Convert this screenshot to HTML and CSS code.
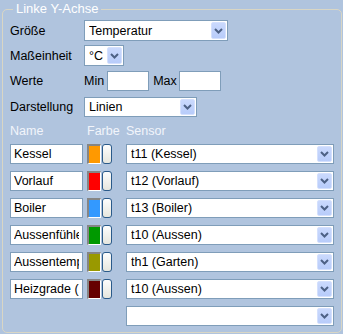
FILE: index.html
```html
<!DOCTYPE html>
<html lang="de">
<head>
<meta charset="UTF-8">
<meta name="viewport" content="width=device-width, initial-scale=1.0">
<title>Linke Y-Achse</title>
<link rel="stylesheet" href="styles.css">
</head>
<body>
<fieldset class="axis">
    <legend>Linke Y-Achse</legend>

    <div class="row r1">
        <label class="lbl">Größe</label>
        <div class="sel w-size">
            <select><option>Temperatur</option></select>
            <span class="arrow"><svg width="9" height="6" viewBox="0 0 9 6"><path d="M1 1 L4.5 4.5 L8 1" fill="none" stroke="#4d6185" stroke-width="2"/></svg></span>
        </div>
    </div>

    <div class="row r2">
        <label class="lbl">Maßeinheit</label>
        <div class="sel w-unit">
            <select><option>°C</option></select>
            <span class="arrow"><svg width="9" height="6" viewBox="0 0 9 6"><path d="M1 1 L4.5 4.5 L8 1" fill="none" stroke="#4d6185" stroke-width="2"/></svg></span>
        </div>
    </div>

    <div class="row r3">
        <label class="lbl">Werte</label>
        <span class="mm">Min</span>
        <input class="txt num" type="text">
        <span class="mm max">Max</span>
        <input class="txt num" type="text">
    </div>

    <div class="row r4">
        <label class="lbl">Darstellung</label>
        <div class="sel w-style">
            <select><option>Linien</option></select>
            <span class="arrow"><svg width="9" height="6" viewBox="0 0 9 6"><path d="M1 1 L4.5 4.5 L8 1" fill="none" stroke="#4d6185" stroke-width="2"/></svg></span>
        </div>
    </div>

    <div class="head">
        <span class="h-name">Name</span>
        <span class="h-color">Farbe</span>
        <span>Sensor</span>
    </div>

    <div class="line">
        <input class="txt name" type="text" value="Kessel">
        <span class="swatch" style="background:#ff9900"></span>
        <span class="pick"></span>
        <div class="sel w-sensor">
            <select><option>t11 (Kessel)</option></select>
            <span class="arrow"><svg width="9" height="6" viewBox="0 0 9 6"><path d="M1 1 L4.5 4.5 L8 1" fill="none" stroke="#4d6185" stroke-width="2"/></svg></span>
        </div>
    </div>
    <div class="line">
        <input class="txt name" type="text" value="Vorlauf">
        <span class="swatch" style="background:#ff0000"></span>
        <span class="pick"></span>
        <div class="sel w-sensor">
            <select><option>t12 (Vorlauf)</option></select>
            <span class="arrow"><svg width="9" height="6" viewBox="0 0 9 6"><path d="M1 1 L4.5 4.5 L8 1" fill="none" stroke="#4d6185" stroke-width="2"/></svg></span>
        </div>
    </div>
    <div class="line">
        <input class="txt name" type="text" value="Boiler">
        <span class="swatch" style="background:#3399ff"></span>
        <span class="pick"></span>
        <div class="sel w-sensor">
            <select><option>t13 (Boiler)</option></select>
            <span class="arrow"><svg width="9" height="6" viewBox="0 0 9 6"><path d="M1 1 L4.5 4.5 L8 1" fill="none" stroke="#4d6185" stroke-width="2"/></svg></span>
        </div>
    </div>
    <div class="line">
        <input class="txt name" type="text" value="Aussenfühler">
        <span class="swatch" style="background:#009900"></span>
        <span class="pick"></span>
        <div class="sel w-sensor">
            <select><option>t10 (Aussen)</option></select>
            <span class="arrow"><svg width="9" height="6" viewBox="0 0 9 6"><path d="M1 1 L4.5 4.5 L8 1" fill="none" stroke="#4d6185" stroke-width="2"/></svg></span>
        </div>
    </div>
    <div class="line">
        <input class="txt name" type="text" value="Aussentemperatur">
        <span class="swatch" style="background:#999900"></span>
        <span class="pick"></span>
        <div class="sel w-sensor">
            <select><option>th1 (Garten)</option></select>
            <span class="arrow"><svg width="9" height="6" viewBox="0 0 9 6"><path d="M1 1 L4.5 4.5 L8 1" fill="none" stroke="#4d6185" stroke-width="2"/></svg></span>
        </div>
    </div>
    <div class="line">
        <input class="txt name" type="text" value="Heizgrade (10)">
        <span class="swatch" style="background:#660000"></span>
        <span class="pick"></span>
        <div class="sel w-sensor">
            <select><option>t10 (Aussen)</option></select>
            <span class="arrow"><svg width="9" height="6" viewBox="0 0 9 6"><path d="M1 1 L4.5 4.5 L8 1" fill="none" stroke="#4d6185" stroke-width="2"/></svg></span>
        </div>
    </div>
    <div class="line last">
        <div class="sel w-sensor">
            <select><option></option></select>
            <span class="arrow"><svg width="9" height="6" viewBox="0 0 9 6"><path d="M1 1 L4.5 4.5 L8 1" fill="none" stroke="#4d6185" stroke-width="2"/></svg></span>
        </div>
    </div>
</fieldset>
</body>
</html>
```

FILE: styles.css
```css
* {
    box-sizing: border-box;
}
body {
    margin: 0;
    background-color: #b0c4de;
    font-family: 'Liberation Sans', Arial, sans-serif;
    font-size: 12.5px;
    color: #000;
}
.axis {
    margin: 2px 1px 0 2px;
    padding: 4px 7px 6px;
    border: 1px solid #d9d6c4;
    border-radius: 5px;
}
.axis legend {
    margin-left: 3px;
    padding: 0 3px;
    color: #fff;
    font-size: 13px;
    line-height: 14px;
}
.row {
    display: flex;
    align-items: center;
    height: 21px;
}
.r1 {
    margin-bottom: 4px;
}
.r2 {
    margin-bottom: 5px;
}
.r3 {
    height: 20px;
    margin-bottom: 6px;
}
.r4 {
    height: 20px;
}
.lbl {
    width: 74px;
}
.mm {
    margin-right: 3px;
}
.mm.max {
    margin-left: 4px;
    margin-right: 2px;
}
.sel {
    position: relative;
    height: 100%;
}
.sel select {
    appearance: none;
    -webkit-appearance: none;
    width: 100%;
    height: 100%;
    margin: 0;
    padding: 0 18px 0 4px;
    border: 1px solid #7f9db9;
    border-radius: 0;
    background: #fff;
    font: inherit;
    color: #000;
}
.arrow {
    position: absolute;
    top: 2px;
    bottom: 2px;
    right: 2px;
    width: 15px;
    display: flex;
    align-items: center;
    justify-content: center;
    border: 1px solid #d4e0fd;
    border-radius: 2px;
    background: linear-gradient(#cad9fd, #b8ccfa);
    pointer-events: none;
}
.w-size {
    width: 144px;
}
.w-unit {
    width: 40px;
}
.w-style {
    width: 113px;
}
.w-sensor {
    width: 208px;
}
.txt {
    height: 20px;
    margin: 0;
    padding: 0 3px;
    border: 1px solid #7f9db9;
    border-radius: 0;
    background: #fff;
    font: inherit;
    color: #000;
}
.num {
    width: 42px;
}
.head {
    display: flex;
    height: 14px;
    line-height: 14px;
    margin: 7px 0 6px;
    color: #f2f5fb;
}
.h-name {
    width: 77px;
}
.h-color {
    width: 39px;
}
.line {
    display: flex;
    height: 20px;
    margin-bottom: 7px;
}
.line.last {
    margin-bottom: 0;
    padding-left: 116px;
}
.name {
    width: 73px;
}
.swatch {
    width: 14px;
    height: 20px;
    margin-left: 4px;
    border-top: 2px solid #858585;
    border-left: 2px solid #858585;
    border-bottom: 1px solid #fff;
    border-right: 1px solid #fff;
}
.pick {
    width: 10px;
    height: 20px;
    margin: 0 14px 0 1px;
    border: 1px solid #2a5a8a;
    border-radius: 3px;
    background: linear-gradient(#fdfdfd, #e6e6de);
}
```
